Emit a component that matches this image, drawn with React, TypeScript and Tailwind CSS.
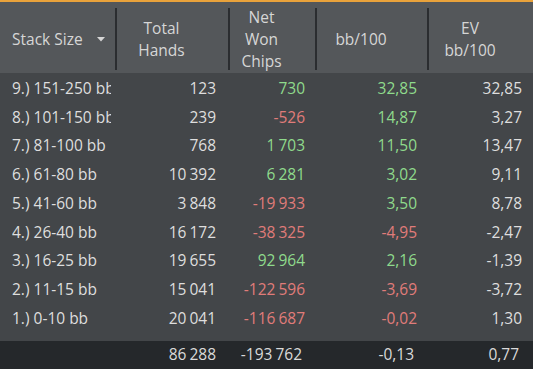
import React from "react";

type Row = { label: string; hands: string; net: string; bb: string; ev: string };

const rows: Row[] = [
  { label: "9.) 151-250 bb", hands: "123", net: "730", bb: "32,85", ev: "32,85" },
  { label: "8.) 101-150 bb", hands: "239", net: "-526", bb: "14,87", ev: "3,27" },
  { label: "7.) 81-100 bb", hands: "768", net: "1 703", bb: "11,50", ev: "13,47" },
  { label: "6.) 61-80 bb", hands: "10 392", net: "6 281", bb: "3,02", ev: "9,11" },
  { label: "5.) 41-60 bb", hands: "3 848", net: "-19 933", bb: "3,50", ev: "8,78" },
  { label: "4.) 26-40 bb", hands: "16 172", net: "-38 325", bb: "-4,95", ev: "-2,47" },
  { label: "3.) 16-25 bb", hands: "19 655", net: "92 964", bb: "2,16", ev: "-1,39" },
  { label: "2.) 11-15 bb", hands: "15 041", net: "-122 596", bb: "-3,69", ev: "-3,72" },
  { label: "1.) 0-10 bb", hands: "20 041", net: "-116 687", bb: "-0,02", ev: "1,30" },
];

const color = (v: string) =>
  v.startsWith("-") ? "text-[#e07c7a]" : "text-[#8fda8c]";

function Num({ v }: { v: string }) {
  const parts = v.split(" ");
  return (
    <>
      {parts.map((p, i) => (
        <React.Fragment key={i}>
          {i > 0 && <span className="inline-block w-[3px]" />}
          {p}
        </React.Fragment>
      ))}
    </>
  );
}

export default function App() {
  return (
    <div
      className="w-[533px] h-[369px] overflow-hidden bg-[#434649] flex flex-col text-[15.5px]"
      style={{ fontFamily: '"Open Sans", "Noto Sans", sans-serif' }}
    >
      <div className="h-[2px] bg-[#e9a23b] shrink-0" />
      <div className="h-[71px] bg-[#54575a] flex pt-[6px] pb-[3px] shrink-0 text-[#d6d6d6] leading-[22px]">
        <div className="w-[115px] flex items-center pl-[12px] gap-[14px]">
          <span>Stack Size</span>
          <svg width="8" height="5" viewBox="0 0 8 5" className="mt-[1px]">
            <path d="M0 0 L8 0 L4 4.5 Z" fill="#d6d6d6" />
          </svg>
        </div>
        <div className="w-[113px] border-l-2 border-[#2b2d30] flex flex-col items-center justify-center pr-[22px] text-center">
          <span>Total</span>
          <span>Hands</span>
        </div>
        <div className="w-[87px] border-l-2 border-[#2b2d30] flex flex-col items-center justify-center pr-[22px] text-center">
          <span>Net</span>
          <span>Won</span>
          <span>Chips</span>
        </div>
        <div className="w-[112px] border-l-2 border-[#2b2d30] flex flex-col items-center justify-center pr-[22px] text-center">
          <span>bb/100</span>
        </div>
        <div className="w-[106px] border-l-2 border-[#2b2d30] flex flex-col items-center justify-center pr-[22px] text-center">
          <span>EV</span>
          <span>bb/100</span>
        </div>
      </div>
      <div className="flex flex-col pt-[1px]">
        {rows.map((r) => (
          <div key={r.label} className="h-[28.75px] flex items-center whitespace-nowrap text-[#dedede]">
            <div className="w-[115px] pl-[12px] pr-[4px] overflow-hidden">
              <div className="overflow-hidden">{r.label}</div>
            </div>
            <div className="w-[113px] pr-[12px] text-right"><Num v={r.hands} /></div>
            <div className={`w-[87px] pr-[10px] text-right ${color(r.net)}`}><Num v={r.net} /></div>
            <div className={`w-[112px] pr-[10px] text-right ${color(r.bb)}`}>{r.bb}</div>
            <div className="w-[106px] pr-[11px] text-right">{r.ev}</div>
          </div>
        ))}
      </div>
      <div className="flex-1" />
      <div className="h-[28px] bg-[#25282b] flex items-center whitespace-nowrap text-[#dadada] shrink-0">
        <div className="w-[115px]" />
        <div className="w-[113px] pr-[12px] text-right"><Num v="86 288" /></div>
        <div className="w-[87px] pr-[13px] text-right"><Num v="-193 762" /></div>
        <div className="w-[112px] pr-[13px] text-right">-0,13</div>
        <div className="w-[106px] pr-[14px] text-right">0,77</div>
      </div>
    </div>
  );
}
